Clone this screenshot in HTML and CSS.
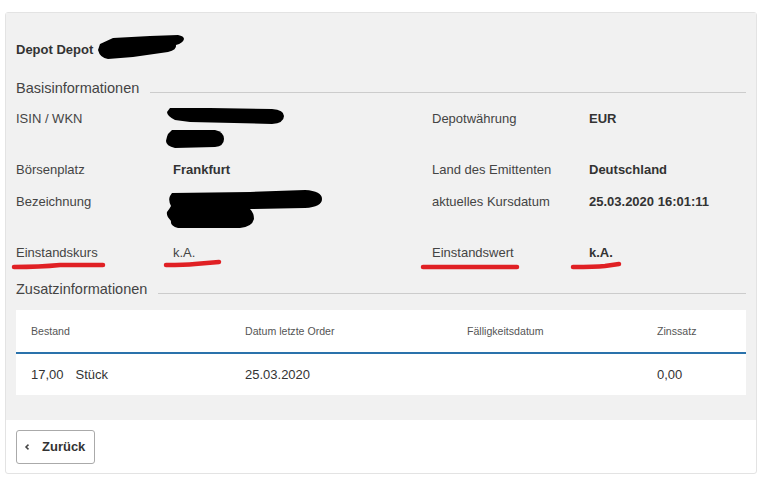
FILE: index.html
```html
<!DOCTYPE html>
<html lang="de">
<head>
<meta charset="utf-8">
<title>Depot</title>
<link rel="stylesheet" href="styles.css">
</head>
<body>
<main class="card">
  <section class="panel">
    <h1 class="title">Depot Depot</h1>
    <h2 class="section-head"><span>Basisinformationen</span><i class="rule"></i></h2>
    <div class="info-grid">
      <div class="label">ISIN / WKN</div>
      <div class="value"><div class="blank"></div><div class="blank"></div></div>
      <div class="label">Depotwährung</div>
      <div class="value">EUR</div>

      <div class="label">Börsenplatz</div>
      <div class="value">Frankfurt</div>
      <div class="label">Land des Emittenten</div>
      <div class="value">Deutschland</div>

      <div class="label">Bezeichnung</div>
      <div class="value"><div class="blank"></div><div class="blank"></div></div>
      <div class="label">aktuelles Kursdatum</div>
      <div class="value">25.03.2020 16:01:11</div>

      <div class="label">Einstandskurs</div>
      <div class="value plain">k.A.</div>
      <div class="label">Einstandswert</div>
      <div class="value">k.A.</div>
    </div>
    <h2 class="section-head section-head-second"><span>Zusatzinformationen</span><i class="rule"></i></h2>
    <table class="extra">
      <thead>
        <tr>
          <th class="c1">Bestand</th>
          <th class="c2">Datum letzte Order</th>
          <th class="c3">Fälligkeitsdatum</th>
          <th class="c4">Zinssatz</th>
        </tr>
      </thead>
      <tbody>
        <tr>
          <td><span class="qty">17,00</span>Stück</td>
          <td>25.03.2020</td>
          <td></td>
          <td>0,00</td>
        </tr>
      </tbody>
    </table>
  </section>
  <footer class="actions">
    <button class="back" type="button"><svg class="chev" width="6" height="8" viewBox="0 0 6 8"><path d="M4.5 1.6 2 4l2.5 2.4" fill="none" stroke="#444" stroke-width="1.5"/></svg>Zurück</button>
  </footer>
</main>
<svg class="ink" width="766" height="480" viewBox="0 0 766 480" aria-hidden="true">
  <g fill="#000">
    <path d="M100 44 L113 38 L150 36 L178 35 Q184 36 184 39 Q183 43 176 45 Q177 50 168 52 L133 57 L108 59 Q100 58 98 50Z"/>
    <path d="M170 108 L210 108 L272 109 Q284 110 284 116 Q284 123 272 124 L190 122 L175 120 Q167 116 167 112Z"/>
    <path d="M172 130 L215 130 Q224 132 224 139 Q224 146 215 147 L175 148 Q166 146 166 141 Q167 136 168 134Z"/>
    <path d="M172 193 L250 192 L305 190 Q322 191 322 199 Q322 207 305 208 L250 209 Q254 213 254 219 Q252 227 240 228 L178 228 Q170 226 171 221 Q166 216 167 212 Q170 208 171 206 Q168 200 170 196Z"/>
  </g>
  <g fill="none" stroke="#e02024" stroke-width="4.5" stroke-linecap="round">
    <path d="M14 267 Q40 267 60 265 L103 265"/>
    <path d="M166 265 Q185 265 195 264 L219 262"/>
    <path d="M423 267 L517 267"/>
    <path d="M573 267 Q595 267 605 266 L619 264"/>
  </g>
</svg>
</body>
</html>
```
FILE: styles.css
```css
* { box-sizing: border-box; }

html, body { background: #fff; }

body {
  margin: 0;
  padding: 12px 9px 6px 5px;
  font-family: "Liberation Sans", Arial, sans-serif;
  font-size: 13px;
  line-height: 20px;
  color: #333;
}

.card {
  border: 1px solid #e3e3e3;
  border-radius: 3px;
  background: #fff;
  height: 462px;
}

.panel {
  background: #f1f1f1;
  padding: 27px 10px 25px;
}

.title {
  margin: 0 0 18px;
  font-size: 13px;
  line-height: 20px;
  font-weight: bold;
}

.section-head {
  display: flex;
  margin: 0 0 11px;
  font-size: 14.5px;
  line-height: 20px;
  font-weight: normal;
  color: #444;
}

.section-head-second { margin: 4px 0 11px; }

.rule {
  flex: 1;
  align-self: flex-end;
  height: 1px;
  margin: 0 0 5px 11px;
  background: #ccc;
}

.info-grid {
  display: grid;
  grid-template-columns: 157px 259px 157px 1fr;
}

.label, .value { padding-bottom: 12px; }

.label { color: #444; }

.value { font-weight: bold; }

.value.plain { font-weight: normal; color: #444; }

.blank { height: 19.5px; }

.extra {
  width: 730px;
  table-layout: fixed;
  border-collapse: collapse;
  background: #fff;
}

.extra th {
  height: 43px;
  padding: 0 0 0 15px;
  border-bottom: 2px solid #2a72ab;
  font-size: 10.6px;
  font-weight: normal;
  text-align: left;
  color: #555;
}

.extra td {
  height: 42px;
  padding: 0 0 0 15px;
  font-size: 13px;
  color: #333;
}

.c1 { width: 214px; }
.c2 { width: 222px; }
.c3 { width: 190px; }

.qty { margin-right: 12px; }

.actions { padding: 10px; }

.back {
  display: flex;
  align-items: center;
  width: 79px;
  height: 34px;
  padding: 0 0 0 7px;
  border: 1px solid #aaa;
  border-radius: 3px;
  background: #fff;
  font: bold 13px/20px "Liberation Sans", Arial, sans-serif;
  color: #333;
}

.chev { margin-right: 12px; }

.ink {
  position: absolute;
  left: 0;
  top: 0;
}
```
